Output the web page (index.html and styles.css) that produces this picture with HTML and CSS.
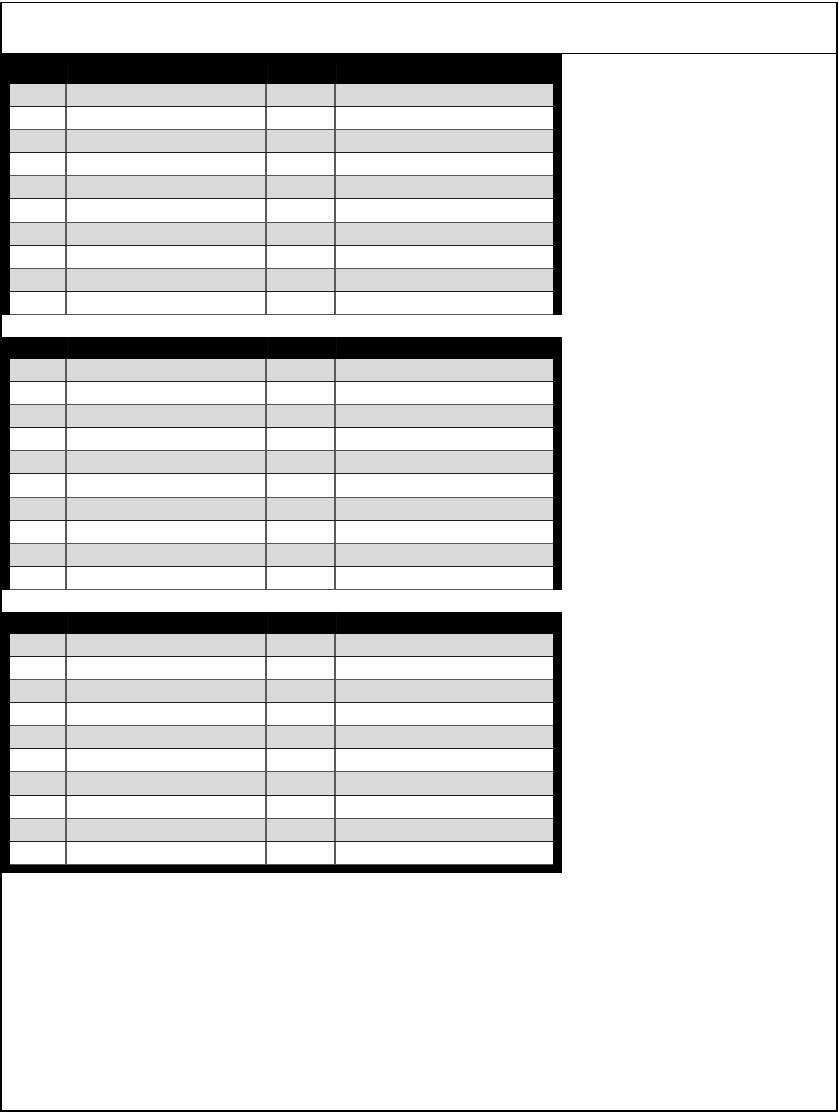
FILE: index.html
```html
<!DOCTYPE html>
<html>
<head>
<meta charset="utf-8">
<link rel="stylesheet" href="styles.css">
</head>
<body>
<div class="frame">
  <div class="top"></div>
  <div class="block first">
    <div class="head"><span></span><span></span><span></span><span></span></div>
    <div class="row g"><span></span><span></span><span></span><span></span></div>
    <div class="row w"><span></span><span></span><span></span><span></span></div>
    <div class="row g"><span></span><span></span><span></span><span></span></div>
    <div class="row w"><span></span><span></span><span></span><span></span></div>
    <div class="row g"><span></span><span></span><span></span><span></span></div>
    <div class="row w"><span></span><span></span><span></span><span></span></div>
    <div class="row g"><span></span><span></span><span></span><span></span></div>
    <div class="row w"><span></span><span></span><span></span><span></span></div>
    <div class="row g"><span></span><span></span><span></span><span></span></div>
    <div class="row w"><span></span><span></span><span></span><span></span></div>
  </div>
  <div class="block">
    <div class="head"><span></span><span></span><span></span><span></span></div>
    <div class="row g"><span></span><span></span><span></span><span></span></div>
    <div class="row w"><span></span><span></span><span></span><span></span></div>
    <div class="row g"><span></span><span></span><span></span><span></span></div>
    <div class="row w"><span></span><span></span><span></span><span></span></div>
    <div class="row g"><span></span><span></span><span></span><span></span></div>
    <div class="row w"><span></span><span></span><span></span><span></span></div>
    <div class="row g"><span></span><span></span><span></span><span></span></div>
    <div class="row w"><span></span><span></span><span></span><span></span></div>
    <div class="row g"><span></span><span></span><span></span><span></span></div>
    <div class="row w"><span></span><span></span><span></span><span></span></div>
  </div>
  <div class="block last">
    <div class="head"><span></span><span></span><span></span><span></span></div>
    <div class="row g"><span></span><span></span><span></span><span></span></div>
    <div class="row w"><span></span><span></span><span></span><span></span></div>
    <div class="row g"><span></span><span></span><span></span><span></span></div>
    <div class="row w"><span></span><span></span><span></span><span></span></div>
    <div class="row g"><span></span><span></span><span></span><span></span></div>
    <div class="row w"><span></span><span></span><span></span><span></span></div>
    <div class="row g"><span></span><span></span><span></span><span></span></div>
    <div class="row w"><span></span><span></span><span></span><span></span></div>
    <div class="row g"><span></span><span></span><span></span><span></span></div>
    <div class="row w"><span></span><span></span><span></span><span></span></div>
  </div>
</div>
</body>
</html>
```

FILE: styles.css
```css
html, body {
  margin: 0;
  padding: 0;
  background: #fff;
  font-family: "Liberation Sans", Arial, sans-serif;
}

.frame {
  box-sizing: border-box;
  margin-top: 2px;
  width: 838px;
  height: 1110px;
  border: 2px solid #000;
  border-top-width: 1px;
  border-left-width: 2px;
}

.top {
  height: 50px;
  border-bottom: 1px solid #000;
  margin-left: -2px;
}

.block {
  box-sizing: border-box;
  width: 562px;
  margin-left: -2px;
  border-left: 10px solid #000;
  border-right: 9px solid #000;
}

.block + .block {
  margin-top: 22px;
}

.block.first {
  border-top: 8px solid #000;
}

.block.last {
  border-bottom: 8px solid #000;
}

.head,
.row {
  display: grid;
  grid-template-columns: 57px 200px 69px 1fr;
}

.head {
  height: 22px;
  background: #000;
}

.head span + span {
  border-left: 1px solid #0a0a0a;
}

.row {
  height: 23.1px;
  box-sizing: border-box;
}

.row.g {
  background: #d9d9d9;
  border-bottom: 1px solid #1c1c1c;
}

.row.w {
  background: #fff;
  border-bottom: 1px solid #555;
}

.row span {
  border-right: 2px solid #5a5a5a;
}

.row span:last-child {
  border-right: none;
}
```
